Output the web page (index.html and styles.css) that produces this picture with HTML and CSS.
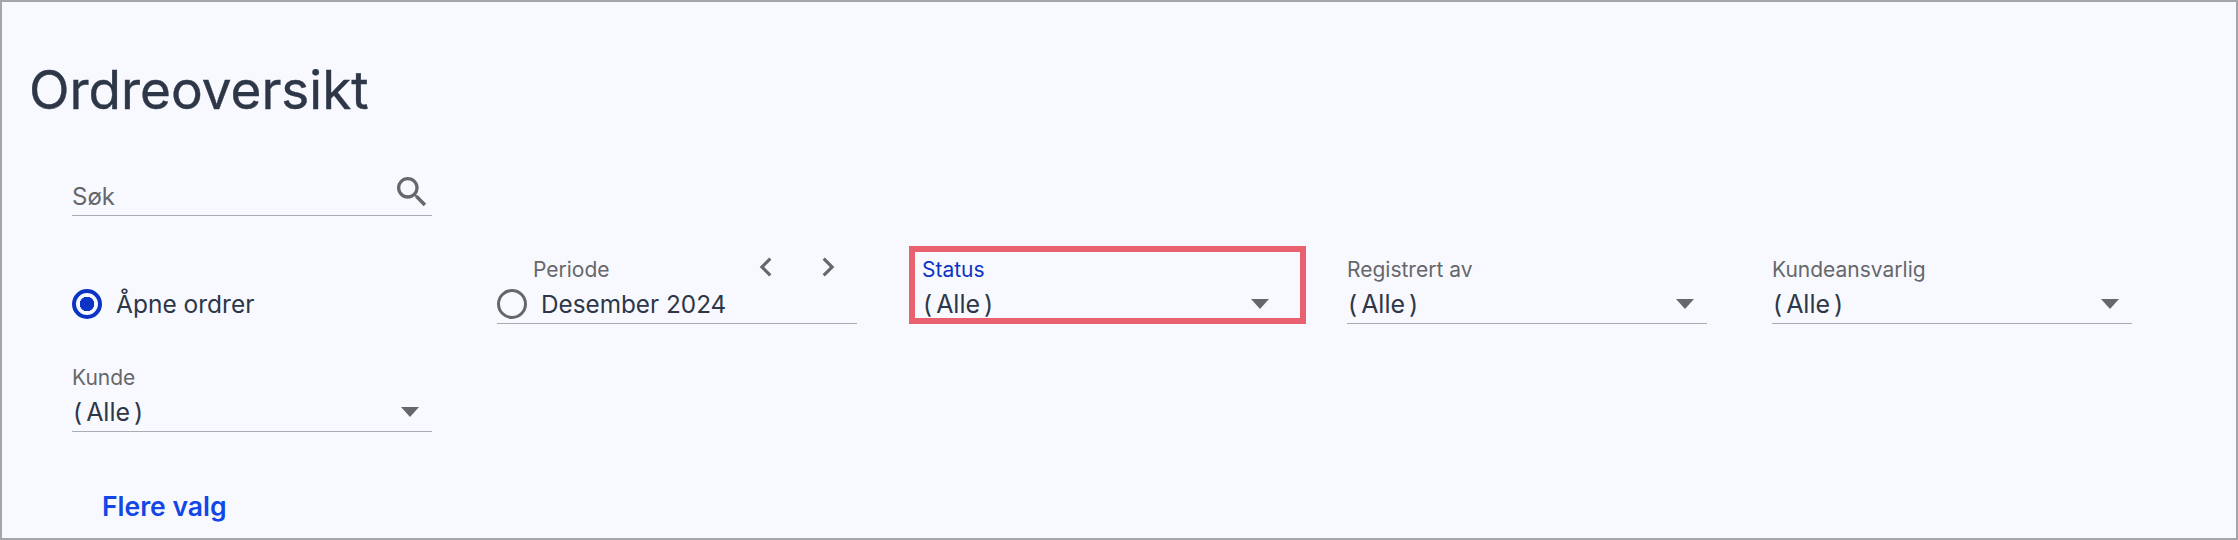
FILE: index.html
```html
<!DOCTYPE html>
<html lang="no">
<head>
    <meta charset="UTF-8">
    <title>Ordreoversikt</title>
    <link rel="stylesheet" href="styles.css">
</head>
<body>

    <div class="container-body">

        <h1 class="page-title">Ordreoversikt</h1>

        <div class="filter-grid">

            <div class="field search-field">
                <div class="field-value">
                    <span class="placeholder">Søk</span>
                    <svg class="icon-search" viewBox="0 0 24 24"><path d="M15.5 14h-.79l-.28-.27A6.47 6.47 0 0 0 16 9.5 6.5 6.5 0 1 0 9.5 16c1.61 0 3.09-.59 4.23-1.57l.27.28v.79l5 4.99L20.49 19l-4.99-5zm-6 0C7.01 14 5 11.99 5 9.5S7.01 5 9.5 5 14 7.01 14 9.5 11.99 14 9.5 14z"/></svg>
                </div>
            </div>

            <div class="radio-cell">
                <span class="radio radio-on"></span>
                <span class="radio-text">Åpne ordrer</span>
            </div>

            <div class="field">
                <div class="field-head">
                    <span class="field-label period-label">Periode</span>
                    <div class="period-nav">
                        <svg viewBox="0 0 24 24"><path d="M15.41 7.41 14 6l-6 6 6 6 1.41-1.41L10.83 12z"/></svg>
                        <svg viewBox="0 0 24 24"><path d="M10 6 8.59 7.41 13.17 12l-4.58 4.59L10 18l6-6z"/></svg>
                    </div>
                </div>
                <div class="field-value">
                    <span class="radio"></span>
                    <span class="value-text period-text">Desember 2024</span>
                </div>
            </div>

            <div class="field field-active">
                <div class="field-head">
                    <span class="field-label">Status</span>
                </div>
                <div class="field-value">
                    <span class="value-text"><span class="paren-l">(</span>Alle<span class="paren-r">)</span></span>
                    <span class="caret"></span>
                </div>
                <div class="highlight"></div>
            </div>

            <div class="field">
                <div class="field-head">
                    <span class="field-label">Registrert av</span>
                </div>
                <div class="field-value">
                    <span class="value-text"><span class="paren-l">(</span>Alle<span class="paren-r">)</span></span>
                    <span class="caret"></span>
                </div>
            </div>

            <div class="field">
                <div class="field-head">
                    <span class="field-label">Kundeansvarlig</span>
                </div>
                <div class="field-value">
                    <span class="value-text"><span class="paren-l">(</span>Alle<span class="paren-r">)</span></span>
                    <span class="caret"></span>
                </div>
            </div>

            <div class="field">
                <div class="field-head">
                    <span class="field-label">Kunde</span>
                </div>
                <div class="field-value">
                    <span class="value-text"><span class="paren-l">(</span>Alle<span class="paren-r">)</span></span>
                    <span class="caret"></span>
                </div>
            </div>

        </div>

        <a class="more-link">Flere valg</a>

    </div>

</body>
</html>
```

FILE: styles.css
```css
:root{
    --colbg: #f8f9fe;
    --colframe: #a3a5aa;
    --coltext: #2d3748;
    --colfade: #66676b;
    --colline: #aaacb3;
    --colblue: #0b34c4;
    --collink: #1246e6;
    --colmark: #e9606e;
}
*{
    box-sizing: border-box;
}
html, body{
    margin: 0;
    height: 100%;
    overflow: hidden;
}
body{
    background: var(--colbg);
    color: var(--coltext);
    font-family: "Inter", "Roboto", sans-serif;
}
.container-body{
    height: 540px;
    border: 2px solid var(--colframe);
    padding-top: 53px;
    overflow: hidden;
}
.page-title{
    margin: 0 0 0 27px;
    font-size: 53px;
    line-height: 70px;
    font-weight: 400;
    -webkit-text-stroke: 0.4px var(--coltext);
}
.filter-grid{
    display: grid;
    grid-template-columns: repeat(5, 360px);
    column-gap: 65px;
    row-gap: 38px;
    margin: 21px 0 0 70px;
}
/* search sits alone on the first row */
.search-field + .radio-cell{
    grid-column-start: 1;
}
.field{
    position: relative;
    height: 70px;
    display: flex;
    flex-direction: column;
    justify-content: flex-end;
    border-bottom: 1px solid var(--colline);
}
.field-head{
    display: flex;
    align-items: center;
    height: 30px;
}
.field-label{
    font-size: 21px;
    color: var(--colfade);
}
.field-active .field-label{
    color: var(--colblue);
}
.period-label{
    margin-left: 36px;
}
.period-nav{
    display: flex;
    gap: 24px;
    height: 28px;
    align-items: center;
    margin-left: auto;
    margin-right: 10px;
    margin-top: -4px;
}
.period-nav svg{
    width: 38px;
    height: 38px;
    fill: var(--colfade);
}
.field-value{
    display: flex;
    align-items: center;
    height: 39px;
}
.value-text{
    font-size: 25px;
}
.paren-l{
    margin-right: 4px;
    margin-left: 1px;
}
.paren-r{
    margin-left: 4px;
}
.period-text{
    margin-left: 14px;
    font-size: 24.3px;
}
.placeholder{
    font-size: 24px;
    color: var(--colfade);
    margin: 2px 0 0 0;
}
.icon-search{
    width: 40px;
    height: 40px;
    margin-left: auto;
    margin-bottom: 7px;
    fill: var(--colfade);
}
.caret{
    width: 0;
    height: 0;
    margin-left: auto;
    margin-right: 13px;
    border-left: 9px solid transparent;
    border-right: 9px solid transparent;
    border-top: 10px solid var(--colfade);
}
.highlight{
    position: absolute;
    top: -8px;
    left: -13px;
    right: -24px;
    bottom: -1px;
    border: 6px solid var(--colmark);
}
.radio{
    display: block;
    flex: none;
    width: 30px;
    height: 30px;
    border: 3px solid var(--colfade);
    border-radius: 50%;
}
.radio-on{
    border: 4px solid var(--colblue);
    background: radial-gradient(circle, var(--colblue) 0 7px, transparent 7.5px);
}
.radio-cell{
    display: flex;
    align-items: center;
    gap: 14px;
    align-self: end;
    height: 41px;
    margin-bottom: 0;
}
.radio-text{
    font-size: 24.5px;
}
.more-link{
    display: block;
    margin: 57px 0 0 100px;
    font-size: 26.5px;
    line-height: 34px;
    font-weight: 600;
    color: var(--collink);
}
```
